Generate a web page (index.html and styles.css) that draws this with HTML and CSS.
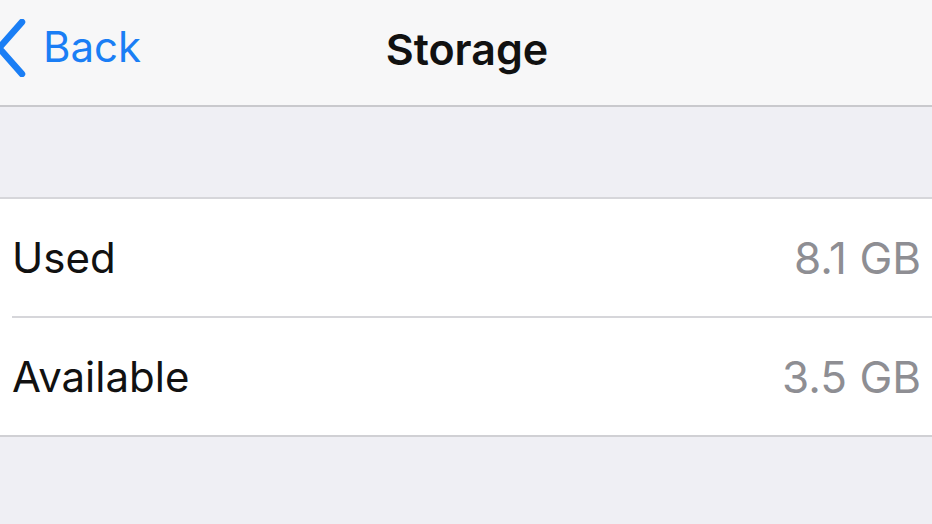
FILE: index.html
```html
<!DOCTYPE html>
<html lang="en">
<head>
<meta charset="utf-8">
<title>Storage</title>
<link rel="stylesheet" href="styles.css">
</head>
<body>
<div class="nav">
  <a class="back" href="#">
    <svg class="chev" width="30" height="58" viewBox="0 0 30 58"><path d="M25 3 L2 29 L25 55" fill="none" stroke="#1a7ef5" stroke-width="6.5" stroke-linecap="round" stroke-linejoin="round"/></svg>
    <span>Back</span>
  </a>
  <div class="title">Storage</div>
</div>
<div class="gap"></div>
<div class="group">
  <div class="row"><span class="label">Used</span><span class="value">8.1 GB</span></div>
  <div class="row"><span class="label">Available</span><span class="value">3.5 GB</span></div>
</div>
</body>
</html>
```
FILE: styles.css
```css
body {
  margin: 0;
  background: #efeff4;
  font-family: "Inter", "Liberation Sans", sans-serif;
  width: 932px;
  height: 524px;
  overflow: hidden;
}
.nav {
  position: relative;
  height: 105px;
  background: #f7f7f8;
  border-bottom: 2px solid #c9c9cd;
  display: flex;
  align-items: center;
  justify-content: center;
}
.back {
  position: absolute;
  left: -3px;
  top: 19px;
  display: flex;
  align-items: center;
  gap: 16px;
  color: #1a7ef5;
  text-decoration: none;
  font-size: 42px;
}
.back span {
  margin-top: -3px;
}
.title {
  font-size: 43px;
  font-weight: 600;
  color: #111;
  margin-left: 2px;
  margin-top: -8px;
}
.gap {
  height: 90px;
}
.group {
  background: #fff;
  border-top: 2px solid #d6d6da;
  border-bottom: 2px solid #d0d0d4;
}
.row {
  height: 117px;
  margin-left: 12px;
  padding-right: 11px;
  display: flex;
  align-items: center;
  justify-content: space-between;
  font-size: 42px;
}
.row + .row {
  border-top: 2px solid #d6d6da;
}
.label {
  color: #111;
}
.value {
  color: #8e8e93;
  font-size: 44px;
}
```
